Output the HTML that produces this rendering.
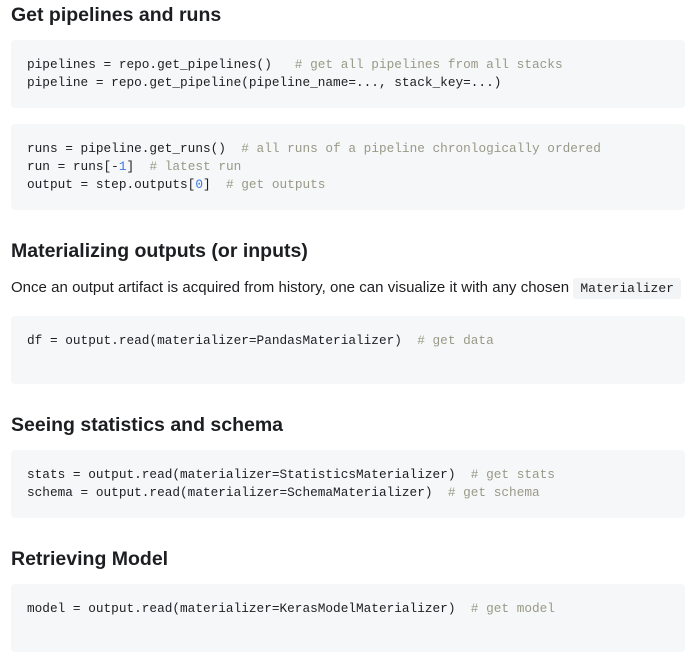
<!DOCTYPE html>
<html><head><meta charset="utf-8"><style>
body{margin:0;width:685px;height:643px;overflow:hidden;background:#fff;font-family:"Liberation Sans",sans-serif;color:#1c1e21}
h2{position:absolute;margin:0;left:11px;font-size:19.5px;font-weight:bold;line-height:24px;color:#1c1e21}
.cb{position:absolute;left:11px;width:674px;background:#f6f7f8;border-radius:4px}
pre{margin:0;position:absolute;left:16px;font-family:"Liberation Mono",monospace;font-size:12.75px;line-height:18px;color:#1c1e21}
.c{color:#999988}.n{color:#3b78e7}
p{position:absolute;margin:0;left:11px;font-size:15px;line-height:20px;word-spacing:0.1px}
code{font-family:"Liberation Mono",monospace;font-size:13px;background:#f3f4f5;border-radius:3px;padding:3px 7px}
</style></head><body>
<h2 style="top:3px">Get pipelines and runs</h2>
<div class="cb" style="top:40px;height:68px"><pre style="top:16px">pipelines = repo.get_pipelines()   <span class="c"># get all pipelines from all stacks</span>
pipeline = repo.get_pipeline(pipeline_name=..., stack_key=...)</pre></div>
<div class="cb" style="top:124px;height:86px"><pre style="top:16px">runs = pipeline.get_runs()  <span class="c"># all runs of a pipeline chronlogically ordered</span>
run = runs[-<span class="n">1</span>]  <span class="c"># latest run</span>
output = step.outputs[<span class="n">0</span>]  <span class="c"># get outputs</span></pre></div>
<h2 style="top:239px">Materializing outputs (or inputs)</h2>
<p style="top:278px">Once an output artifact is acquired from history, one can visualize it with any chosen <code>Materializer</code></p>
<div class="cb" style="top:316px;height:68px"><pre style="top:16px">df = output.read(materializer=PandasMaterializer)  <span class="c"># get data</span></pre></div>
<h2 style="top:413px">Seeing statistics and schema</h2>
<div class="cb" style="top:450px;height:68px"><pre style="top:16px">stats = output.read(materializer=StatisticsMaterializer)  <span class="c"># get stats</span>
schema = output.read(materializer=SchemaMaterializer)  <span class="c"># get schema</span></pre></div>
<h2 style="top:547px">Retrieving Model</h2>
<div class="cb" style="top:584px;height:68px"><pre style="top:16px">model = output.read(materializer=KerasModelMaterializer)  <span class="c"># get model</span></pre></div>
</body></html>
